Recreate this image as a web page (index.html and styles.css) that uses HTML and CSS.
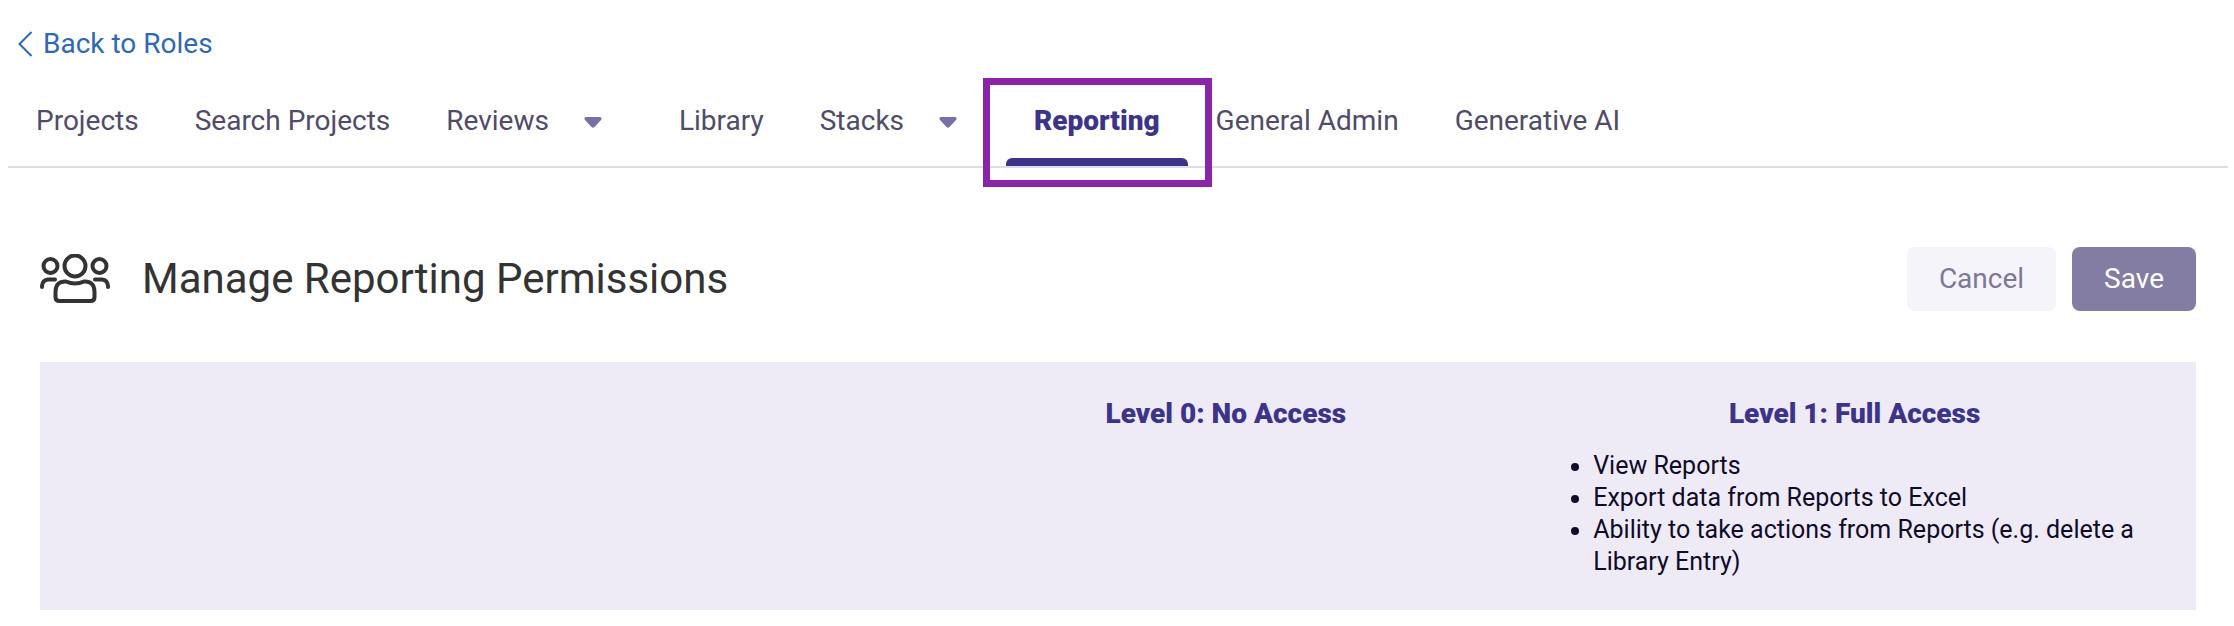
FILE: index.html
```
<!DOCTYPE html>
<html lang="en">
<head>
    <meta charset="UTF-8">
    <meta name="viewport" content="width=device-width, initial-scale=1.0">
    <title>Manage Reporting Permissions</title>
    <link rel="stylesheet" href="styles.css">
</head>
<body>
    <a class="back-link" href="#">
        <svg class="back-icon" viewBox="0 0 14 26" aria-hidden="true"><path d="M13.5 1 L1.5 13 L13.5 25"/></svg>
        Back to Roles
    </a>

    <nav class="tabs">
        <a class="tab" href="#">Projects</a>
        <a class="tab" href="#">Search Projects</a>
        <a class="tab" href="#">Reviews</a>
        <button class="tab-menu" type="button" aria-label="Reviews menu">
            <svg class="caret" viewBox="0 0 18 11" aria-hidden="true"><path d="M2 0 H16 Q18.500 .5 17 3 L10.500 10 Q9 11.500 7.500 10 L1 3 Q-.5 .5 2 0 Z"/></svg>
        </button>
        <a class="tab" href="#">Library</a>
        <a class="tab" href="#">Stacks</a>
        <button class="tab-menu" type="button" aria-label="Stacks menu">
            <svg class="caret" viewBox="0 0 18 11" aria-hidden="true"><path d="M2 0 H16 Q18.500 .5 17 3 L10.500 10 Q9 11.500 7.500 10 L1 3 Q-.5 .5 2 0 Z"/></svg>
        </button>
        <a class="tab active" href="#" aria-current="page">Reporting</a>
        <a class="tab" href="#">General Admin</a>
        <a class="tab" href="#">Generative AI</a>
    </nav>

    <main class="content">
        <div class="page-header">
            <svg class="people-icon" viewBox="0 0 70 50" aria-hidden="true">
                <circle cx="35" cy="12" r="10.500"/>
                <circle cx="10.500" cy="12" r="7"/>
                <circle cx="59.500" cy="12" r="7"/>
                <path d="M2 33 V32 Q2.500 26 8 25.500 H15"/>
                <path d="M68 33 V32 Q67.500 26 62 25.500 H55"/>
                <path d="M26 27.500 Q35 31.500 44 27.500 Q54.500 27 54.500 38 V43 Q54.500 47 50.500 47 H19.500 Q15.500 47 15.500 43 V38 Q15.500 27 26 27.500 Z"/>
            </svg>
            <h1>Manage Reporting Permissions</h1>
            <button class="btn cancel" type="button">Cancel</button>
            <button class="btn save" type="button">Save</button>
        </div>

        <section class="levels">
            <div class="level">
                <h2>Level 0: No Access</h2>
            </div>
            <div class="level">
                <h2>Level 1: Full Access</h2>
                <ul>
                    <li>View Reports</li>
                    <li>Export data from Reports to Excel</li>
                    <li>Ability to take actions from Reports (e.g. delete a Library Entry)</li>
                </ul>
            </div>
        </section>
    </main>
</body>
</html>
```

FILE: styles.css
```
* {
    box-sizing: border-box;
}
body {
    margin: 0;
    padding: 24px 6px 16px 8px;
    font-family: Roboto, Arial, sans-serif;
    font-size: 28px;
    line-height: 40px;
    background-color: #fff;
}
.back-link {
    display: flex;
    align-items: center;
    gap: 11px;
    width: fit-content;
    margin-left: 10px;
    color: #3068b4;
    text-decoration: none;
}
.back-icon {
    width: 14px;
    height: 26px;
    fill: none;
    stroke: #3068b4;
    stroke-width: 2;
}

/* Tabs */
.tabs {
    display: flex;
    margin-top: 16px;
    border-bottom: 2px solid #dfdcea;
}
.tab {
    position: relative;
    padding: 21px 28px 25px;
    color: #504b68;
    text-decoration: none;
    white-space: nowrap;
}
.tab.active {
    color: #3c3489;
    font-weight: 900;
}
.tab.active::before {
    content: "";
    position: absolute;
    left: 0;
    right: 0;
    bottom: 0;
    height: 8px;
    border-radius: 6px 6px 0 0;
    background-color: #3c3489;
}
/* Highlight frame around the current tab */
.tab.active::after {
    content: "";
    position: absolute;
    z-index: 1;
    top: -2px;
    bottom: -21px;
    left: -23px;
    right: -24px;
    border: 7px solid #8a24a8;
}
.tab-menu {
    display: flex;
    align-items: center;
    width: 32px;
    margin-right: 42px;
    padding: 0 7px 2px;
    border: none;
    background: none;
}
.caret {
    width: 18px;
    height: 11px;
    fill: #786fa8;
}

/* Page header */
.content {
    padding: 79px 32px 0;
}
.page-header {
    display: flex;
    align-items: center;
    gap: 16px;
    margin-bottom: 51px;
}
.people-icon {
    width: 70px;
    height: 50px;
    fill: none;
    stroke: #333;
    stroke-width: 4;
    stroke-linecap: round;
}
h1 {
    flex: 1;
    margin: 0 0 0 16px;
    color: #333;
    font-size: 42px;
    font-weight: 400;
    line-height: 48px;
}
.btn {
    height: 64px;
    padding: 0 32px 2px;
    border: none;
    border-radius: 8px;
    font-family: inherit;
    font-size: 28px;
}
.cancel {
    color: #7d7895;
    background-color: #f5f4fa;
}
.save {
    color: #fff;
    background-color: #837da3;
}

/* Access levels */
.levels {
    display: grid;
    grid-template-columns: 30% 30%;
    justify-content: end;
    padding: 32px 27px 32px 33px;
    background-color: #eeebf6;
}
h2 {
    margin: 0;
    color: #3c3489;
    font-size: 28px;
    font-weight: 900;
    text-align: center;
}
.level ul {
    margin: 16px 0 0;
    padding-left: 53px;
    color: #0f0c29;
    font-size: 25px;
    line-height: 32px;
}
```
